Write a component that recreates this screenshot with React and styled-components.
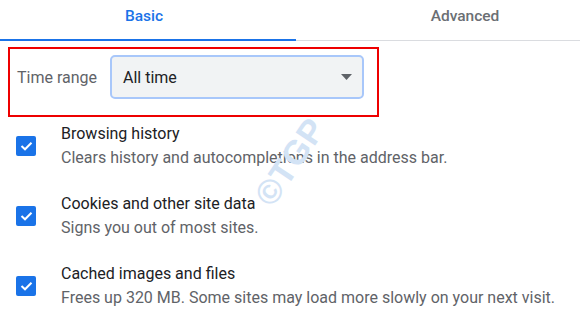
import React from 'react';
import styled, { createGlobalStyle } from 'styled-components';

const GlobalStyle = createGlobalStyle`
  html, body {
    margin: 0;
    padding: 0;
    background: #fff;
  }
  body {
    font-family: Roboto, "Noto Sans", Arial, sans-serif;
  }
`

const Page = styled.div`
  position: relative;
  width: 580px;
  height: 328px;
  overflow: hidden;
  background: #fff;
`

const TabBar = styled.div`
  display: grid;
  grid-template-columns: 296px 1fr;
  height: 40px;
  border-bottom: 1px solid #dadce0;
`

const Tab = styled.div`
  display: flex;
  justify-content: center;
  align-items: flex-start;
  box-sizing: border-box;
  height: 41px;
  margin-bottom: -1px;
  padding-top: 6px;
  padding-right: ${p => (p.$active ? '8px' : '0')};
  padding-left: ${p => (p.$active ? '0' : '54px')};
  font-size: 15.5px;
  line-height: 20px;
  font-weight: 500;
  color: ${p => (p.$active ? '#1a73e8' : '#6b6f74')};
  border-bottom: 2px solid ${p => (p.$active ? '#1a73e8' : 'transparent')};
`

const Highlight = styled.div`
  display: flex;
  align-items: flex-start;
  box-sizing: border-box;
  width: 371px;
  height: 70px;
  margin: 6px 0 7px 8px;
  padding: 6px 0 0 7px;
  border: 2px solid #ee0000;
`

const Label = styled.div`
  width: 93px;
  height: 44px;
  display: flex;
  align-items: center;
  font-size: 16px;
  color: #5f6368;
`

const Select = styled.div`
  display: flex;
  align-items: center;
  justify-content: space-between;
  box-sizing: border-box;
  width: 254px;
  height: 44px;
  padding: 0 10px 0 11px;
  border: 2px solid #a8c7fa;
  border-radius: 5px;
  background: #f1f3f4;
  font-size: 16px;
  color: #202124;
`

const List = styled.div`
  display: flex;
  flex-direction: column;
  gap: 26px;
`

const Item = styled.div`
  display: flex;
  align-items: center;
  padding-left: 16px;
`

const Box = styled.div`
  width: 20px;
  height: 20px;
  border-radius: 2px;
  background: #1a73e8;
  display: flex;
  align-items: center;
  justify-content: center;
  margin-right: 25px;
  flex-shrink: 0;
`

const Texts = styled.div`
  display: flex;
  flex-direction: column;
  gap: 4px;
`

const Title = styled.div`
  font-size: 16px;
  line-height: 20px;
  color: #202124;
`

const Sub = styled.div`
  font-size: 16px;
  line-height: 20px;
  color: #5f6368;
`

const Watermark = styled.span`
  position: absolute;
  left: 290px;
  top: 162px;
  transform: translate(-50%, -50%) rotate(-56deg);
  font-family: "Liberation Sans", Arial, sans-serif;
  font-weight: 700;
  font-size: 34px;
  letter-spacing: 0.5px;
  color: #d3e3f5;
  pointer-events: none;
  white-space: nowrap;
`

const items = [
  { title: 'Browsing history', sub: 'Clears history and autocompletions in the address bar.' },
  { title: 'Cookies and other site data', sub: 'Signs you out of most sites.' },
  { title: 'Cached images and files', sub: 'Frees up 320 MB. Some sites may load more slowly on your next visit.' },
]

const Check = () => (
  <svg width="13" height="10" viewBox="0 0 13 10">
    <path d="M1.5 5 L5 8.3 L11.5 1.7" fill="none" stroke="#fff" strokeWidth="2" />
  </svg>
)

const App = () => (
  <Page>
    <GlobalStyle />
    <TabBar>
      <Tab $active>Basic</Tab>
      <Tab>Advanced</Tab>
    </TabBar>
    <Highlight>
      <Label>Time range</Label>
      <Select>
        All time
        <svg width="11" height="6" viewBox="0 0 11 6">
          <path d="M0 0 L11 0 L5.5 6 Z" fill="#5f6368" />
        </svg>
      </Select>
    </Highlight>
    <List>
      {items.map(item => (
        <Item key={item.title}>
          <Box><Check /></Box>
          <Texts>
            <Title>{item.title}</Title>
            <Sub>{item.sub}</Sub>
          </Texts>
        </Item>
      ))}
    </List>
    <Watermark>©TGP</Watermark>
  </Page>
)

export default App
